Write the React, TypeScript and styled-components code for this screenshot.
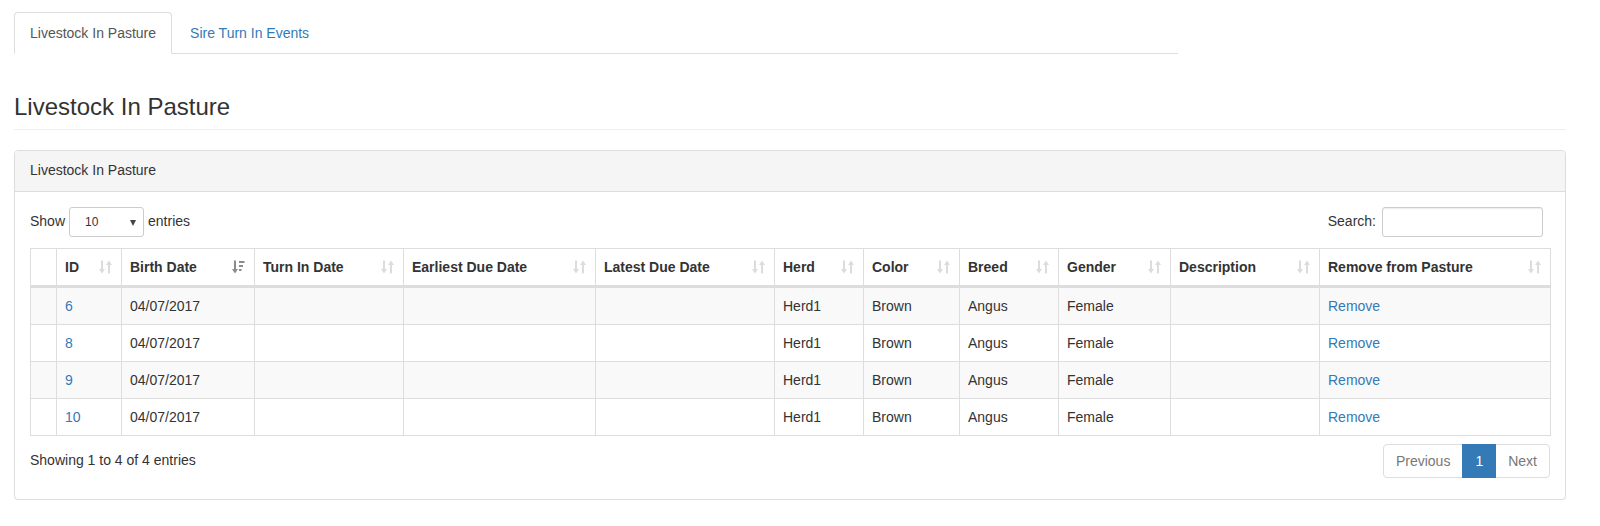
import React from "react";
import styled, { createGlobalStyle, css } from "styled-components";

const GlobalStyle = createGlobalStyle`
  * {
    box-sizing: border-box;
  }
  body {
    margin: 0;
    background: #fff;
    color: #333;
    font-family: "Liberation Sans", Arial, Helvetica, sans-serif;
    font-size: 14px;
    line-height: 1.42857;
  }
`;

const Page = styled.div`
  padding: 12px 34px 0 14px;
`;

const TabBar = styled.ul`
  display: flex;
  width: 75%;
  margin: 0;
  padding: 0;
  list-style: none;
  border-bottom: 1px solid #ddd;
`;

const TabItem = styled.li`
  margin-bottom: -1px;
`;

const TabLink = styled.a<{ $active?: boolean }>`
  display: block;
  margin-right: 2px;
  padding: 10px 15px;
  line-height: 20px;
  border: 1px solid transparent;
  border-radius: 4px 4px 0 0;
  color: #337ab7;
  text-decoration: none;
  cursor: pointer;
  ${(p) =>
    p.$active &&
    css`
      color: #555;
      background: #fff;
      border-color: #ddd #ddd transparent;
    `}
`;

const PageHeader = styled.div`
  margin: 40px 0 20px;
  padding-bottom: 9px;
  border-bottom: 1px solid #eee;
`;

const Title = styled.h3`
  margin: 0;
  font-size: 24px;
  font-weight: 500;
  line-height: 1.1;
`;

const Panel = styled.section`
  background: #fff;
  border: 1px solid #ddd;
  border-radius: 4px;
  box-shadow: 0 1px 1px rgba(0, 0, 0, 0.05);
`;

const PanelHeading = styled.div`
  padding: 10px 15px;
  background: #f5f5f5;
  border-bottom: 1px solid #ddd;
  border-radius: 3px 3px 0 0;
`;

const PanelBody = styled.div`
  padding: 15px;
`;

const Toolbar = styled.div`
  display: flex;
  justify-content: space-between;
  align-items: center;
  height: 30px;
`;

const Label = styled.label`
  display: flex;
  align-items: center;
  gap: 4px;
`;

const SelectWrap = styled.span`
  position: relative;
  display: inline-block;
`;

const Select = styled.select`
  appearance: none;
  width: 75px;
  height: 30px;
  padding: 0 10px 0 15px;
  font-family: inherit;
  font-size: 12px;
  color: #333;
  background: #fff;
  border: 1px solid #ccc;
  border-radius: 3px;
`;

const Caret = styled.span`
  position: absolute;
  right: 8px;
  top: 13px;
  border-left: 3.5px solid transparent;
  border-right: 3.5px solid transparent;
  border-top: 6px solid #444;
  pointer-events: none;
`;

const SearchInput = styled.input`
  width: 161px;
  height: 30px;
  margin: 0 7px 0 2px;
  padding: 5px 10px;
  font-family: inherit;
  font-size: 12px;
  border: 1px solid #ccc;
  border-radius: 3px;
  box-shadow: inset 0 1px 1px rgba(0, 0, 0, 0.075);
`;

const Table = styled.table`
  width: 100%;
  margin-top: 11px;
  table-layout: fixed;
  border-collapse: collapse;
  border: 1px solid #ddd;
`;

const Col = styled.col<{ $w: number }>`
  width: ${(p) => p.$w}px;
`;

const Th = styled.th`
  padding: 8px 9px 8px 8px;
  line-height: 20px;
  text-align: left;
  font-weight: bold;
  vertical-align: bottom;
  border: 1px solid #ddd;
  border-bottom-width: 3px;
`;

const HeadCell = styled.div`
  display: flex;
  justify-content: space-between;
  align-items: center;
  white-space: nowrap;
`;

const Row = styled.tr`
  &:nth-child(odd) {
    background: #f9f9f9;
  }
`;

const Td = styled.td`
  padding: 8px;
  line-height: 20px;
  vertical-align: top;
  border: 1px solid #ddd;
`;

const Link = styled.a`
  color: #337ab7;
  text-decoration: none;
  cursor: pointer;
`;

const Footer = styled.div`
  display: flex;
  justify-content: space-between;
  align-items: flex-start;
  margin-top: 8px;
  padding-bottom: 6px;
`;

const Info = styled.div`
  padding-top: 7px;
`;

const Pagination = styled.ul`
  display: flex;
  margin: 0;
  padding: 0;
  list-style: none;
`;

const PageButton = styled.a<{ $active?: boolean; $disabled?: boolean }>`
  display: block;
  margin-left: -1px;
  padding: 6px 12px;
  line-height: 20px;
  color: #337ab7;
  background: #fff;
  border: 1px solid #ddd;
  text-decoration: none;
  ${(p) =>
    p.$disabled &&
    css`
      color: #777;
    `}
  ${(p) =>
    p.$active &&
    css`
      position: relative;
      z-index: 2;
      color: #fff;
      background: #337ab7;
      border-color: #337ab7;
    `}
  li:first-child > & {
    margin-left: 0;
    border-radius: 4px 0 0 4px;
  }
  li:last-child > & {
    border-radius: 0 4px 4px 0;
  }
`;

function SortIcon({ sorted }: { sorted?: boolean }) {
  const fill = sorted ? "#8c8c8c" : "#dcdcdc";
  return (
    <svg width="13" height="14" viewBox="0 0 13 14">
      <rect x="2" y="0.5" width="2" height="9" fill={fill} />
      <polygon points="0,9 6,9 3,13.5" fill={fill} />
      {sorted ? (
        <>
          <rect x="7" y="1" width="5.5" height="2" fill={fill} />
          <rect x="7" y="5" width="4" height="2" fill={fill} />
          <rect x="7" y="9" width="2.5" height="2" fill={fill} />
        </>
      ) : (
        <>
          <rect x="9" y="4.5" width="2" height="9" fill={fill} />
          <polygon points="7,5 13,5 10,0.5" fill={fill} />
        </>
      )}
    </svg>
  );
}

const columns = [
  { title: "", width: 26 },
  { title: "ID", width: 65 },
  { title: "Birth Date", width: 133, sorted: true },
  { title: "Turn In Date", width: 149 },
  { title: "Earliest Due Date", width: 192 },
  { title: "Latest Due Date", width: 179 },
  { title: "Herd", width: 89 },
  { title: "Color", width: 96 },
  { title: "Breed", width: 99 },
  { title: "Gender", width: 112 },
  { title: "Description", width: 149 },
  { title: "Remove from Pasture", width: 231 },
];

const livestock = [
  { id: 6, birth: "04/07/2017" },
  { id: 8, birth: "04/07/2017" },
  { id: 9, birth: "04/07/2017" },
  { id: 10, birth: "04/07/2017" },
];

export default function App() {
  return (
    <Page>
      <GlobalStyle />
      <TabBar>
        <TabItem>
          <TabLink $active>Livestock In Pasture</TabLink>
        </TabItem>
        <TabItem>
          <TabLink>Sire Turn In Events</TabLink>
        </TabItem>
      </TabBar>

      <PageHeader>
        <Title>Livestock In Pasture</Title>
      </PageHeader>

      <Panel>
        <PanelHeading>Livestock In Pasture</PanelHeading>
        <PanelBody>
          <Toolbar>
            <Label>
              Show
              <SelectWrap>
                <Select defaultValue="10">
                  <option value="10">10</option>
                  <option value="25">25</option>
                  <option value="50">50</option>
                  <option value="100">100</option>
                </Select>
                <Caret />
              </SelectWrap>
              entries
            </Label>
            <Label>
              Search:
              <SearchInput type="search" />
            </Label>
          </Toolbar>

          <Table>
            <colgroup>
              {columns.map((c, i) => (
                <Col key={i} $w={c.width} />
              ))}
            </colgroup>
            <thead>
              <tr>
                {columns.map((c, i) => (
                  <Th key={i}>
                    {c.title && (
                      <HeadCell>
                        <span>{c.title}</span>
                        <SortIcon sorted={c.sorted} />
                      </HeadCell>
                    )}
                  </Th>
                ))}
              </tr>
            </thead>
            <tbody>
              {livestock.map((a) => (
                <Row key={a.id}>
                  <Td></Td>
                  <Td>
                    <Link>{a.id}</Link>
                  </Td>
                  <Td>{a.birth}</Td>
                  <Td></Td>
                  <Td></Td>
                  <Td></Td>
                  <Td>Herd1</Td>
                  <Td>Brown</Td>
                  <Td>Angus</Td>
                  <Td>Female</Td>
                  <Td></Td>
                  <Td>
                    <Link>Remove</Link>
                  </Td>
                </Row>
              ))}
            </tbody>
          </Table>

          <Footer>
            <Info>Showing 1 to 4 of 4 entries</Info>
            <Pagination>
              <li>
                <PageButton $disabled>Previous</PageButton>
              </li>
              <li>
                <PageButton $active>1</PageButton>
              </li>
              <li>
                <PageButton $disabled>Next</PageButton>
              </li>
            </Pagination>
          </Footer>
        </PanelBody>
      </Panel>
    </Page>
  );
}
